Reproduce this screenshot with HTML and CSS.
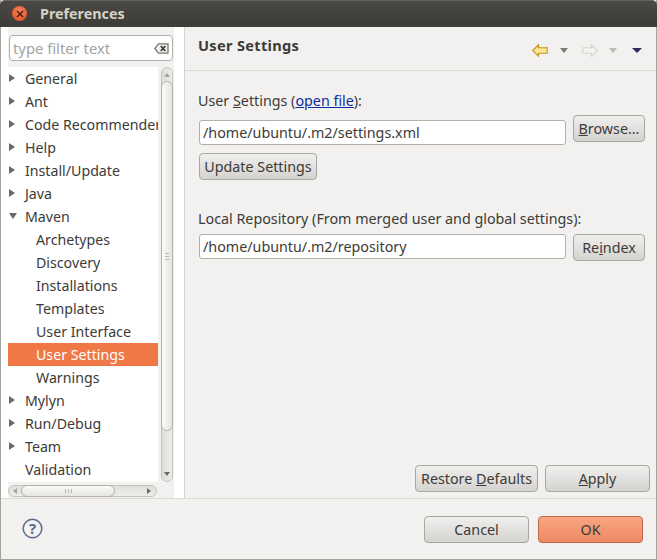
FILE: index.html
```html
<!DOCTYPE html>
<html lang="en">
<head>
<meta charset="utf-8">
<title>Preferences</title>
<link rel="stylesheet" href="styles.css">
</head>
<body>
<div class="window">
  <header class="titlebar">
    <span class="close"><svg width="8" height="8" viewBox="0 0 8 8"><path d="M1 1l6 6M7 1l-6 6" stroke="#4a1408" stroke-width="1.4" fill="none"/></svg></span>
    <span class="title">Preferences</span>
  </header>
  <div class="main">
    <aside class="sidebar">
      <div class="filter-wrap">
        <div class="filter">
          <span class="filter-text">type filter text</span>
          <svg class="filter-clear" width="15" height="11" viewBox="0 0 15 11"><path d="M4.5 .8H14v9.4H4.500L.8 5.500z" fill="#f4f3f1" stroke="#77756f" stroke-width="1.300"/><path d="M6.800 3l4.500 5M11.300 3l-4.500 5" stroke="#3c3b37" stroke-width="1.800" fill="none"/></svg>
        </div>
      </div>
      <div class="tree-area">
        <div class="tree-col">
          <ul class="tree">
            <li class="row"><i class="tw closed"></i><span>General</span></li>
            <li class="row"><i class="tw closed"></i><span>Ant</span></li>
            <li class="row"><i class="tw closed"></i><span>Code Recommenders</span></li>
            <li class="row"><i class="tw closed"></i><span>Help</span></li>
            <li class="row"><i class="tw closed"></i><span>Install/Update</span></li>
            <li class="row"><i class="tw closed"></i><span>Java</span></li>
            <li class="row"><i class="tw open"></i><span>Maven</span></li>
            <li class="row child"><span>Archetypes</span></li>
            <li class="row child"><span>Discovery</span></li>
            <li class="row child"><span>Installations</span></li>
            <li class="row child"><span>Templates</span></li>
            <li class="row child"><span>User Interface</span></li>
            <li class="row child selected"><span>User Settings</span></li>
            <li class="row child"><span>Warnings</span></li>
            <li class="row"><i class="tw closed"></i><span>Mylyn</span></li>
            <li class="row"><i class="tw closed"></i><span>Run/Debug</span></li>
            <li class="row"><i class="tw closed"></i><span>Team</span></li>
            <li class="row"><i class="tw none"></i><span>Validation</span></li>
          </ul>
          <div class="hwrap">
            <div class="hscroll">
              <i class="arrow-l"></i>
              <div class="htrack"><div class="hthumb"><b></b><b></b><b></b></div></div>
              <i class="arrow-r"></i>
            </div>
          </div>
        </div>
        <div class="vwrap">
          <div class="vscroll">
            <i class="arrow-u"></i>
            <div class="vtrack"><div class="vthumb"><b></b><b></b><b></b></div></div>
            <i class="arrow-d"></i>
          </div>
        </div>
      </div>
    </aside>
    <section class="content">
      <div class="page-head">
        <h1>User Settings</h1>
        <div class="nav">
          <svg width="16" height="13" viewBox="0 0 16 13"><path d="M.8 6.500L6.500 .8v3h8.700v5.400H6.500v3z" fill="#fbe596" stroke="#c8951a" stroke-width="1.100"/></svg>
          <i class="drop grey"></i>
          <svg class="fwd" width="16" height="13" viewBox="0 0 16 13"><path d="M15.200 6.500L9.500 .8v3H.8v5.400h8.700v3z" fill="#f4f3f1" stroke="#d5d4d0" stroke-width="1.100"/></svg>
          <i class="drop pale"></i>
          <i class="drop navy"></i>
        </div>
      </div>
      <div class="page-body">
        <label class="lbl first">User <u>S</u>ettings (<a href="#">open file</a>):</label>
        <div class="line">
          <div class="input">/home/ubuntu/.m2/settings.xml</div>
          <button class="btn browse"><u>B</u>rowse...</button>
        </div>
        <button class="btn update">Update Settings</button>
        <label class="lbl second">Local Repository (From merged user and global settings):</label>
        <div class="line repo">
          <div class="input">/home/ubuntu/.m2/repository</div>
          <button class="btn browse">Re<u>i</u>ndex</button>
        </div>
        <div class="page-actions">
          <button class="btn restore">Restore <u>D</u>efaults</button>
          <button class="btn apply"><u>A</u>pply</button>
        </div>
      </div>
    </section>
  </div>
  <footer class="footer">
    <svg class="help" width="21" height="21" viewBox="0 0 21 21"><circle cx="10.500" cy="10.500" r="9.300" fill="#f4f3f1" stroke="#5a6b8c" stroke-width="1.500"/><text x="10.500" y="15.800" text-anchor="middle" class="help-q">?</text></svg>
    <div class="footer-btns">
      <button class="btn cancel">Cancel</button>
      <button class="btn ok">OK</button>
    </div>
  </footer>
</div>
</body>
</html>
```
FILE: styles.css
```css
* { box-sizing: border-box; }
html, body { margin: 0; padding: 0; }
body { width: 657px; height: 560px; overflow: hidden; background: #f2f1f0; font-family: "Noto Sans", "Open Sans", sans-serif; font-size: 14.3px; color: #3c3b37; }
.window { width: 657px; height: 560px; display: flex; flex-direction: column; border-left: 1px solid #a5a39e; border-right: 1px solid #a5a39e; border-bottom: 1px solid #a5a39e; }
.titlebar { height: 27px; margin: 0 -1px; background: linear-gradient(#4a4944, #3c3b37); border-top: 1px solid #66645f; border-radius: 5px 5px 0 0; display: flex; align-items: center; padding: 0 0 1px 12px; flex: none; }
.close { width: 15px; height: 15px; border-radius: 50%; background: radial-gradient(circle at 50% 35%, #f7835a, #dd4a1e); display: flex; align-items: center; justify-content: center; }
.title { margin-left: 13px; font-weight: 700; font-size: 14.300px; color: #d5d2c8; }
.main { flex: 1; display: flex; min-height: 0; }
.sidebar { width: 184px; flex: none; background: #fff; border-right: 1px solid #d5d3cf; padding: 0 0 0 7px; display: flex; flex-direction: column; }
.filter-wrap { background: #f2f1f0; width: 166px; padding: 8px 1px 4px 1px; height: 40px; flex: none; }
.filter { height: 26px; background: #fff; border: 1px solid #b3b0aa; border-radius: 4px; display: flex; align-items: center; justify-content: space-between; padding: 0 3px 0 3px; }
.filter-text { color: #a5a39f; font-size: 14.800px; }
.tree-area { flex: 1; display: flex; min-height: 0; }
.tree-col { width: 150px; flex: none; display: flex; flex-direction: column; }
.tree { list-style: none; margin: 0; padding: 0; flex: 1; overflow: hidden; font-size: 14.200px; }
.row { height: 23px; display: flex; align-items: center; white-space: nowrap; padding-left: 1px; }
.row.child { padding-left: 28px; }
.row.selected { background: #f07746; color: #fff; }
.tw { width: 16px; height: 10px; margin-right: 0; flex: none; display: block; }
.tw.closed { width: 0; height: 0; border-left: 6px solid #6b6a65; border-top: 4px solid transparent; border-bottom: 4px solid transparent; margin-right: 10px; margin-bottom: 2px; }
.tw.open { width: 0; height: 0; border-top: 6px solid #6b6a65; border-left: 4px solid transparent; border-right: 4px solid transparent; margin-right: 8px; margin-bottom: 2px; }
.tw.none { margin-right: 0; }
.hwrap { height: 16px; flex: none; background: #f2f1f0; padding: 3px 1px 0 0; }
.hscroll { height: 12px; display: flex; align-items: center; padding: 0 1px; border-radius: 6px; border: 1px solid #c5c3be; background: linear-gradient(#e0dfdc, #eeedeb); }
.arrow-l { width: 0; height: 0; border-right: 4px solid #a5a39e; border-top: 3px solid transparent; border-bottom: 3px solid transparent; margin: 0 4px 0 3px; flex: none; }
.arrow-r { width: 0; height: 0; border-left: 4px solid #6b6a65; border-top: 3px solid transparent; border-bottom: 3px solid transparent; margin: 0 4px 0 6px; flex: none; }
.htrack { flex: 1; height: 12px; margin-top: -1px; margin-bottom: -1px; }
.hthumb { width: 94px; height: 12px; background: linear-gradient(#fbfbfa, #e6e5e2); border: 1px solid #b3b0aa; border-radius: 6px; display: flex; align-items: center; justify-content: center; gap: 2px; }
.hthumb b { width: 1px; height: 4px; background: #b8b6b1; }
.vwrap { width: 16px; flex: none; background: #f2f1f0; padding: 0 1px 16px 3px; }
.vscroll { width: 12px; height: 100%; display: flex; flex-direction: column; align-items: center; border: 1px solid #c5c3be; border-radius: 6px; background: linear-gradient(90deg, #dedddA, #eeedeb); }
.arrow-u { width: 0; height: 0; border-bottom: 4px solid #a5a39e; border-left: 3px solid transparent; border-right: 3px solid transparent; margin: 5px 0 4px; flex: none; }
.arrow-d { width: 0; height: 0; border-top: 4px solid #6b6a65; border-left: 3px solid transparent; border-right: 3px solid transparent; margin: 4px 0 5px; flex: none; }
.vtrack { flex: 1; width: 12px; }
.vthumb { height: 350px; width: 12px; background: linear-gradient(90deg, #fbfbfa, #e6e5e2); border: 1px solid #b3b0aa; border-radius: 6px; display: flex; flex-direction: column; align-items: center; justify-content: center; gap: 2px; }
.vthumb b { width: 4px; height: 1px; background: #b8b6b1; }
.content { flex: 1; display: flex; flex-direction: column; min-width: 0; }
.page-head { height: 44px; flex: none; border-bottom: 1px solid #dcdad5; display: flex; justify-content: space-between; padding: 9px 13px 0 13px; }
h1 { margin: 0; font-size: 14.600px; letter-spacing: .3px; font-weight: 700; color: #3c3b37; line-height: 18px; }
.nav { display: flex; align-items: center; height: 26px; margin-top: 1px; }
.drop { width: 0; height: 0; border-left: 4px solid transparent; border-right: 4px solid transparent; border-top: 5px solid #7a7974; margin-left: 12px; }
.drop.pale { border-top-color: #bdbcb8; margin-left: 11px; }
.drop.navy { border-left-width: 5px; border-right-width: 5px; border-top-color: #2d2a5c; margin-left: 15px; margin-right: 1px; }
.fwd { margin-left: 14px; }
.page-body { flex: 1; display: flex; flex-direction: column; padding: 20px 10px 6px 14px; }
.lbl { display: block; line-height: 20px; white-space: nowrap; margin-left: -1px; }
.lbl.second { margin-top: 29px; }
a { color: #0b2d9c; }
.line { display: flex; align-items: flex-start; gap: 7px; margin-top: 9px; }
.line.repo { margin-top: 5px; }
.input { width: 367px; flex: none; height: 25px; background: #fff; border: 1px solid #b3b0aa; border-radius: 3px; padding-left: 3px; line-height: 23px; white-space: nowrap; }
.btn { font: inherit; color: #3c3b37; height: 27px; padding: 0; border: 1px solid #a8a6a1; border-radius: 4px; background: linear-gradient(#f0efee, #d4d3d0); white-space: nowrap; display: block; }
.browse { width: 72px; flex: none; }
.line:not(.repo) .browse { margin-top: -5px; }
.update { width: 118px; margin-top: 8px; }
.page-actions { margin-top: auto; display: flex; justify-content: flex-end; gap: 7px; margin-right: -4px; }
.restore { width: 123px; }
.apply { width: 105px; }
.footer { height: 61px; flex: none; border-top: 1px solid #dcdad5; display: flex; align-items: center; justify-content: space-between; padding: 0 13px 0 21px; }
.help { margin-top: -1px; }
.help-q { font-family: "Noto Sans", sans-serif; font-size: 15px; font-weight: 700; fill: #5a6b8c; }
.footer-btns { display: flex; gap: 9px; }
.cancel, .ok { width: 105px; }
.ok { background: linear-gradient(#f9a581, #ee8a63); border-color: #b9694a; }
```
